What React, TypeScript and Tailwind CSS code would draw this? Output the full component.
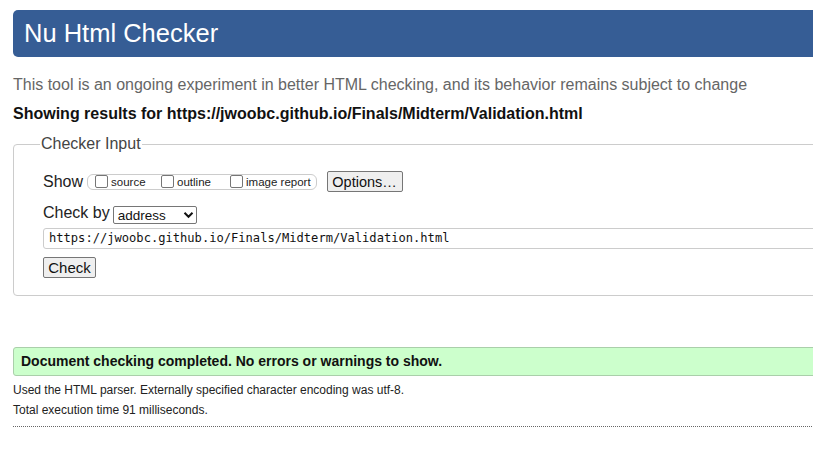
export default function App() {
  return (
    <div className="w-[813px] h-[457px] overflow-hidden bg-white font-['Liberation_Sans',Arial,sans-serif]">
      <div className="w-[1000px] pl-[13px]">
        <h1 className="mt-[10px] h-[47px] rounded-l-[5px] bg-[#365d95] pl-[11px] text-[25.5px] leading-[47px] text-white">
          Nu Html Checker
        </h1>

        <p className="mt-[19px] text-[16px] leading-[18px] text-[#666]">
          This tool is an ongoing experiment in better HTML checking, and its behavior remains subject to change
        </p>
        <p className="mt-[11px] text-[16px] font-bold leading-[18px] text-[#111]">
          Showing results for https://jwoobc.github.io/Finals/Midterm/Validation.html
        </p>

        <fieldset className="mt-[12px] rounded-[4px] border border-[#ccc] pb-[17px] pl-[29px]">
          <legend className="ml-[-3px] px-[1px] text-[16px] leading-[18px] text-[#444]">Checker Input</legend>

          <div className="mt-[18px] flex h-[21px] items-center">
            <span className="text-[16px] leading-[18px] text-[#222]">Show</span>
            <div className="ml-[4px] flex h-[16px] items-center rounded-[6px] border border-[#ccc] pl-[7px] pr-[5px]">
              <Check label="source" className="w-[66px]" />
              <Check label="outline" className="w-[69px]" />
              <Check label="image report" />
            </div>
            <button className="ml-[10px] h-[21px] w-[76px] rounded-[2px] border border-[#767676] bg-[#efefef] text-[14.5px] leading-[18px] text-[#111]">
              Options…
            </button>
          </div>

          <div className="mt-[12px] flex items-start">
            <span className="text-[16px] leading-[18px] text-[#222]">Check by</span>
            <div className="ml-[3px] mt-[2px] flex h-[18px] w-[84px] items-center rounded-[2px] border border-[#767676] bg-white pl-[4px] text-[13.5px] leading-[15px] text-[#111]">
              <span>address</span>
              <svg className="ml-[17px]" width="11" height="8" viewBox="0 0 11 8">
                <path d="M1.5 1.8 L5.5 5.8 L9.5 1.8" fill="none" stroke="#111" strokeWidth="2" />
              </svg>
            </div>
          </div>

          <div className="mt-[4px] h-[21px] rounded-l-[3px] border border-[#ccc] pl-[5px] font-['DejaVu_Sans_Mono',monospace] text-[12.1px] leading-[19px] text-[#111]">
            https://jwoobc.github.io/Finals/Midterm/Validation.html
          </div>

          <button className="mt-[8px] block h-[21px] w-[53px] rounded-[2px] border border-[#767676] bg-[#efefef] text-[15px] leading-[18px] text-[#111]">
            Check
          </button>
        </fieldset>

        <div className="mt-[51px] h-[29px] rounded-l-[3px] border border-[#aacfaa] bg-[#ccffcc] pl-[7px] text-[14px] font-bold leading-[27px] text-[#111]">
          Document checking completed. No errors or warnings to show.
        </div>

        <div className="mt-[4px] text-[12px] leading-[20px] text-[#222]">
          <p>Used the HTML parser. Externally specified character encoding was utf-8.</p>
          <p>Total execution time 91 milliseconds.</p>
        </div>

        <div className="mt-[6px] border-t border-dotted border-[#666]" />
      </div>
    </div>
  );
}

function Check({ label, className = '' }: { label: string; className?: string }) {
  return (
    <label className={`flex items-center ${className}`}>
      <span className="h-[13px] w-[13px] rounded-[2px] border border-[#767676] bg-white" />
      <span className="ml-[3px] text-[11.5px] leading-[14px] text-[#222]">{label}</span>
    </label>
  );
}
